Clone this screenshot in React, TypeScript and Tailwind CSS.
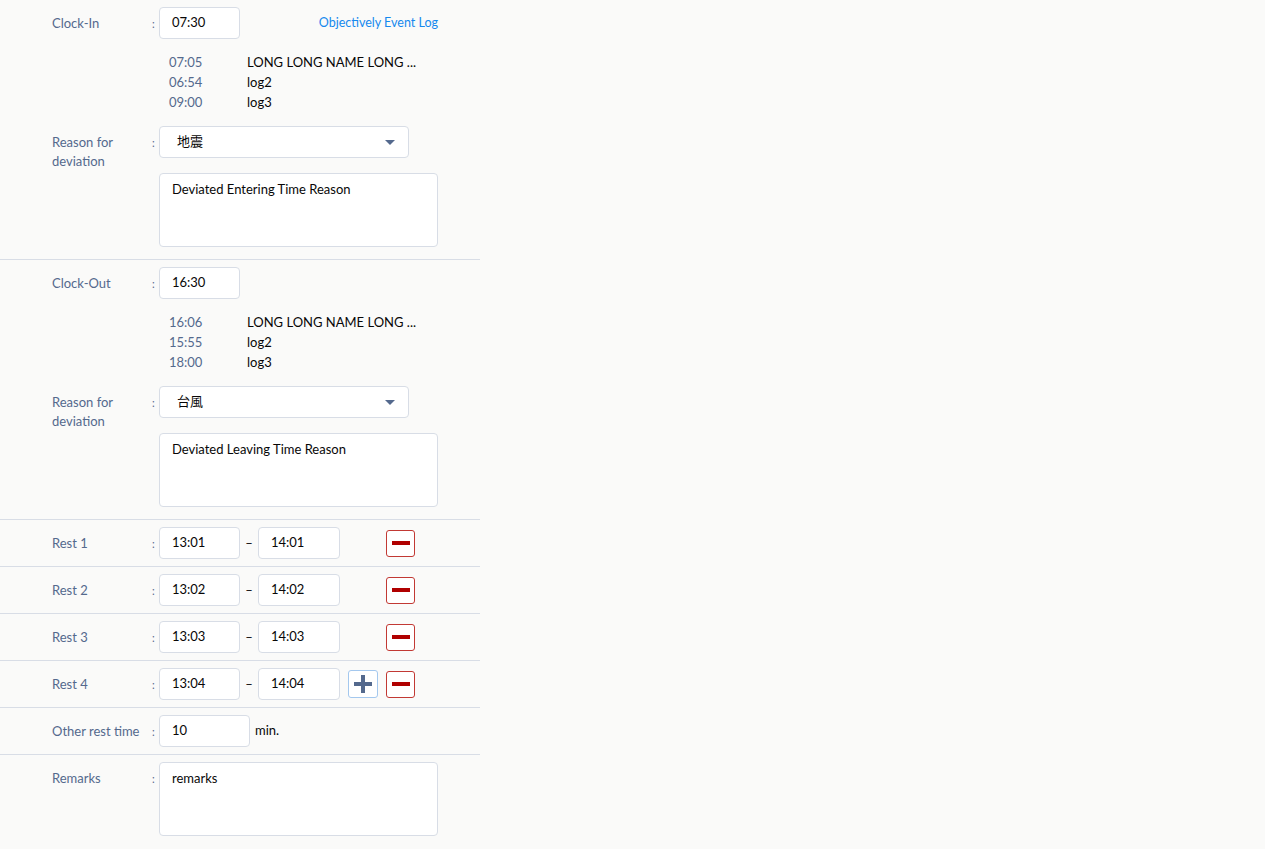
import React from 'react';

type LogEntry = { time: string; name: string };

const labelClass = "w-[100px] shrink-0 pt-[7px] text-[13px] leading-[19px] text-[#54698d]";
const colonClass = "w-[7px] shrink-0 pt-[7px] text-[11px] leading-[19px] text-[#54698d]";
const inputClass = "h-[32px] rounded-[4px] border border-[#d8dde6] bg-white pl-[12px] text-[13px] text-[#080707] flex items-center";

const Row: React.FC<{ label: string; children: React.ReactNode; className?: string }> = ({ label, children, className }) => (
  <div className={`flex pl-[52px] ${className ?? ''}`}>
    <div className={labelClass}>{label}</div>
    <div className={colonClass}>:</div>
    <div className="w-[279px] shrink-0">{children}</div>
  </div>
);

const LogList: React.FC<{ logs: LogEntry[] }> = ({ logs }) => (
  <div className="mt-[14px] pl-[10px]">
    {logs.map((log, i) => (
      <div key={i} className="flex h-[20px] items-center text-[13px]">
        <span className="w-[78px] text-[#54698d]">{log.time}</span>
        <span className="w-[190px] whitespace-nowrap text-[#080707]">{log.name}</span>
      </div>
    ))}
  </div>
);

const ReasonSelect: React.FC<{ value: string }> = ({ value }) => (
  <div className="flex h-[32px] w-[250px] items-center justify-between rounded-[4px] border border-[#d8dde6] bg-white pl-[17px] pr-[13px] text-[13px] text-[#080707]">
    <span>{value}</span>
    <svg width="10" height="5" viewBox="0 0 10 5">
      <path d="M0 0 L10 0 L5 5 Z" fill="#54698d" />
    </svg>
  </div>
);

const TextBox: React.FC<{ text: string }> = ({ text }) => (
  <div className="h-[74px] w-[279px] rounded-[4px] border border-[#d8dde6] bg-white px-[12px] pt-[7px] text-[13px] leading-[17px] text-[#080707]">
    {text}
  </div>
);

const ClockSection: React.FC<{ label: string; time: string; logs: LogEntry[]; reason: string; text: string; showLink?: boolean }> = ({ label, time, logs, reason, text, showLink }) => (
  <div className="border-b border-[#d8dde6] pb-[12px] pt-[7px]">
    <Row label={label}>
      <div className="flex items-center justify-between">
        <div className={`${inputClass} w-[81px]`}>{time}</div>
        {showLink && <span className="text-[12.5px] text-[#1589ee]">Objectively Event Log</span>}
      </div>
    </Row>
    <div className="flex pl-[159px]">
      <LogList logs={logs} />
    </div>
    <Row label="Reason for deviation" className="mt-[13px]">
      <ReasonSelect value={reason} />
      <div className="mt-[15px]">
        <TextBox text={text} />
      </div>
    </Row>
  </div>
);

const RestRow: React.FC<{ index: number; start: string; end: string; canAdd?: boolean }> = ({ index, start, end, canAdd }) => (
  <div className="border-b border-[#d8dde6] py-[7px]">
    <Row label={`Rest ${index}`}>
      <div className="flex items-center">
        <div className={`${inputClass} w-[81px]`}>{start}</div>
        <div className="w-[18px] pt-[2px] text-center text-[13px] text-[#080707]">–</div>
        <div className={`${inputClass} w-[82px]`}>{end}</div>
        <div className="ml-[8px] w-[30px]">
          {canAdd && (
            <button className="flex h-[28px] w-[30px] items-center justify-center rounded-[3px] border border-[#a4c8ee] bg-white">
              <svg width="18" height="18" viewBox="0 0 18 18">
                <rect x="7" y="0" width="4" height="18" fill="#54698d" />
                <rect x="0" y="7" width="18" height="4" fill="#54698d" />
              </svg>
            </button>
          )}
        </div>
        <button className="ml-[8px] flex h-[27px] w-[29px] items-center justify-center rounded-[3px] border border-[#c23934] bg-white">
          <svg width="18" height="4" viewBox="0 0 18 4">
            <rect x="0" y="0" width="18" height="4" fill="#b00000" />
          </svg>
        </button>
      </div>
    </Row>
  </div>
);

const App: React.FC = () => {
  const inLogs: LogEntry[] = [
    { time: '07:05', name: 'LONG LONG NAME LONG ...' },
    { time: '06:54', name: 'log2' },
    { time: '09:00', name: 'log3' },
  ];
  const outLogs: LogEntry[] = [
    { time: '16:06', name: 'LONG LONG NAME LONG ...' },
    { time: '15:55', name: 'log2' },
    { time: '18:00', name: 'log3' },
  ];

  return (
    <div className="min-h-screen bg-[#fafaf9]" style={{ fontFamily: 'Lato, "Noto Sans CJK JP", sans-serif' }}>
      <div className="w-[480px]">
        <ClockSection label="Clock-In" time="07:30" logs={inLogs} reason="地震" text="Deviated Entering Time Reason" showLink />
        <ClockSection label="Clock-Out" time="16:30" logs={outLogs} reason="台風" text="Deviated Leaving Time Reason" />
        <RestRow index={1} start="13:01" end="14:01" />
        <RestRow index={2} start="13:02" end="14:02" />
        <RestRow index={3} start="13:03" end="14:03" />
        <RestRow index={4} start="13:04" end="14:04" canAdd />
        <div className="border-b border-[#d8dde6] py-[7px]">
          <Row label="Other rest time">
            <div className="flex items-center">
              <div className={`${inputClass} w-[91px]`}>10</div>
              <span className="ml-[5px] text-[13px] text-[#080707]">min.</span>
            </div>
          </Row>
        </div>
        <div className="pt-[7px] pb-[13px]">
          <Row label="Remarks">
            <TextBox text="remarks" />
          </Row>
        </div>
      </div>
    </div>
  );
};

export default App;
